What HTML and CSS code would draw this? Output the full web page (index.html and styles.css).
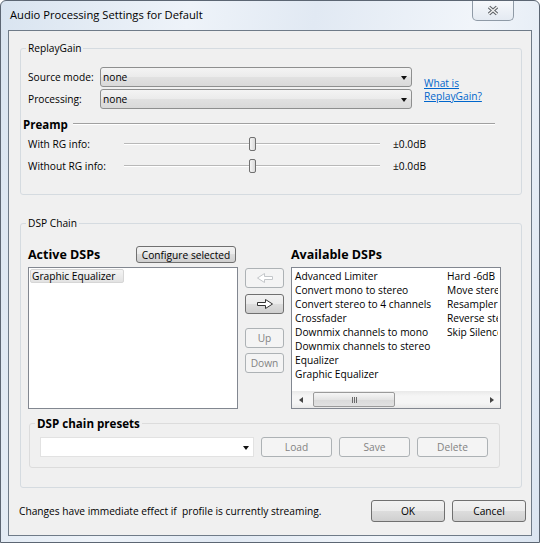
FILE: index.html
```html
<!DOCTYPE html>
<html lang="en">
<head>
  <meta charset="UTF-8" />
  <title>Audio Processing Settings for Default</title>
  <link rel="stylesheet" href="styles.css">
</head>
<body>
  <div class="window">
    <!-- title bar -->
    <div class="titlebar">
      <span class="title">Audio Processing Settings for Default</span>
      <button class="close" title="Close">
        <svg width="14" height="11" viewBox="0 0 14 11">
          <path d="M3 2L11 9M11 2L3 9" stroke="#5f6368" stroke-width="3.6" />
          <path d="M3 2L11 9M11 2L3 9" stroke="#f2f2f2" stroke-width="1.4" />
        </svg>
      </button>
    </div>

    <div class="client">
      <!-- ReplayGain -->
      <fieldset class="group replaygain">
        <legend>ReplayGain</legend>
        <div class="rg-top">
          <div class="rg-fields">
            <div class="field">
              <span class="field-label">Source mode:</span>
              <div class="combo"><span>none</span><span class="combo-arrow"></span></div>
            </div>
            <div class="field">
              <span class="field-label">Processing:</span>
              <div class="combo"><span>none</span><span class="combo-arrow"></span></div>
            </div>
          </div>
          <a class="help-link" href="#">What is<br>ReplayGain?</a>
        </div>

        <div class="preamp">
          <span class="preamp-title">Preamp</span>
          <span class="preamp-rule"></span>
        </div>
        <div class="sliders">
          <div class="slider-row">
            <span class="slider-label">With RG info:</span>
            <div class="slider-track"><span class="slider-thumb"></span></div>
            <span class="slider-value">±0.0dB</span>
          </div>
          <div class="slider-row">
            <span class="slider-label">Without RG info:</span>
            <div class="slider-track"><span class="slider-thumb"></span></div>
            <span class="slider-value">±0.0dB</span>
          </div>
        </div>
      </fieldset>

      <!-- DSP chain -->
      <fieldset class="group dsp">
        <legend>DSP Chain</legend>
        <div class="dsp-cols">
          <div class="dsp-col">
            <div class="dsp-head">
              <span class="dsp-title">Active DSPs</span>
              <button class="btn configure-btn">Configure selected</button>
            </div>
            <div class="dsp-list active-list">
              <div class="active-item">Graphic Equalizer</div>
            </div>
          </div>

          <div class="move-btns">
            <button class="btn move-btn" disabled>
              <svg width="18" height="12" viewBox="0 0 18 12">
                <path d="M16.5 4.5H8.5V1.5L1.5 6L8.5 10.5V7.5H16.5Z" fill="#fff" stroke="#c4c7ca" />
              </svg>
            </button>
            <button class="btn move-btn right">
              <svg width="18" height="12" viewBox="0 0 18 12">
                <path d="M1.5 4.5H9.5V1.5L16.5 6L9.5 10.5V7.5H1.5Z" fill="#fff" stroke="#333" />
              </svg>
            </button>
            <button class="btn move-btn up" disabled>Up</button>
            <button class="btn move-btn down" disabled>Down</button>
          </div>

          <div class="dsp-col avail">
            <div class="dsp-head">
              <span class="dsp-title">Available DSPs</span>
            </div>
            <div class="dsp-list avail-list">
              <div class="avail-items">
                <div class="avail-col">
                  <div class="item">Advanced Limiter</div>
                  <div class="item">Convert mono to stereo</div>
                  <div class="item">Convert stereo to 4 channels</div>
                  <div class="item">Crossfader</div>
                  <div class="item">Downmix channels to mono</div>
                  <div class="item">Downmix channels to stereo</div>
                  <div class="item">Equalizer</div>
                  <div class="item">Graphic Equalizer</div>
                </div>
                <div class="avail-col2">
                  <div class="item">Hard -6dB</div>
                  <div class="item">Move stereo to center + side</div>
                  <div class="item">Resampler (PPHS)</div>
                  <div class="item">Reverse stereo channels</div>
                  <div class="item">Skip Silence</div>
                </div>
              </div>
              <div class="hscroll">
                <span class="sb-arrow"><span class="tri-left"></span></span>
                <span class="sb-thumb"><span class="grip"></span></span>
                <span class="sb-arrow end"><span class="tri-right"></span></span>
              </div>
            </div>
          </div>
        </div>

        <fieldset class="presets">
          <legend>DSP chain presets</legend>
          <div class="presets-row">
            <div class="preset-combo"><span class="combo-arrow"></span></div>
            <button class="btn preset-btn" disabled>Load</button>
            <button class="btn preset-btn" disabled>Save</button>
            <button class="btn preset-btn" disabled>Delete</button>
          </div>
        </fieldset>
      </fieldset>

      <div class="footer">
        <span class="footer-note">Changes have immediate effect if&nbsp; profile is currently streaming.</span>
        <button class="btn ok">OK</button>
        <button class="btn cancel">Cancel</button>
      </div>
    </div>
  </div>
</body>
</html>
```

FILE: styles.css
```css
* {
  box-sizing: border-box;
}

body {
  margin: 0;
  font-family: "Open Sans", "Noto Sans", sans-serif;
  font-size: 10.2px;
  color: #000;
  background: #fff;
}

.window {
  width: 540px;
  height: 543px;
  border: 1px solid #5c6673;
  border-radius: 6px 6px 0 0;
  background: linear-gradient(100deg, #d9e4f0 0%, #eef3f9 30%, #e1e9f3 50%, #f1f5fa 75%, #dbe5f1 100%);
  display: flex;
  flex-direction: column;
  overflow: hidden;
}

/* title bar */
.titlebar {
  height: 29px;
  flex-shrink: 0;
  display: flex;
  align-items: flex-start;
}

.title {
  margin: 6px 0 0 9px;
  font-size: 11.2px;
  line-height: 16px;
}

.close {
  margin: -1px 25px 0 auto;
  width: 42px;
  height: 21px;
  padding: 0;
  border: 1px solid #8f9aa6;
  border-top: none;
  border-radius: 0 0 5px 5px;
  background: linear-gradient(#f7f9fc, #e4eaf2);
  display: flex;
  align-items: center;
  justify-content: center;
}

/* dialog area */
.client {
  margin-left: 7px;
  width: 524px;
  height: 506px;
  border: 1px solid #6f7b88;
  background: #f0f0f0;
  padding: 9px 5px 0 11px;
  display: flex;
  flex-direction: column;
}

.group {
  margin: 0 4px 0 0;
  padding: 11px 9px 17px 7px;
  border: 1px solid #d5dbe0;
  border-radius: 3px;
  min-width: 0;
}

.group > legend {
  padding: 0 2px;
  margin-left: -2px;
  line-height: 16px;
}

/* ReplayGain */
.rg-top {
  display: flex;
  align-items: flex-start;
}

.rg-fields {
  display: flex;
  flex-direction: column;
  gap: 2px;
}

.field {
  display: flex;
  align-items: center;
  height: 20px;
}

.field-label {
  width: 72px;
}

.combo {
  width: 312px;
  height: 20px;
  border: 1px solid #8e8f8f;
  border-radius: 3px;
  background: linear-gradient(#f4f4f4, #ebebeb 50%, #e1e1e1 52%, #d9d9d9);
  display: flex;
  align-items: center;
  padding: 0 0 0 2px;
}

.combo-arrow {
  margin: 1px 4px 0 auto;
  width: 0;
  height: 0;
  border-left: 3.5px solid transparent;
  border-right: 3.5px solid transparent;
  border-top: 4px solid #111;
}

.help-link {
  margin: 10px 0 0 12px;
  line-height: 13px;
  color: #0066cc;
  text-decoration: underline;
}

.preamp {
  display: flex;
  align-items: center;
  height: 16px;
  margin: 7px 0 0 -5px;
}

.preamp-title {
  font-weight: bold;
  font-size: 11.5px;
}

.preamp-rule {
  flex: 1;
  margin: 0 17px 0 5px;
  border-top: 1px solid #a0a0a0;
  border-bottom: 1px solid #fff;
}

.sliders {
  margin-top: 1px;
}

.slider-row {
  display: flex;
  align-items: center;
  height: 22px;
}

.slider-label {
  width: 96px;
}

.slider-track {
  width: 256px;
  height: 14px;
  display: flex;
  justify-content: center;
  align-items: center;
  background: linear-gradient(to bottom, transparent 6px, #b8b8b8 6px, #b8b8b8 7px, #fff 7px, #fff 8px, transparent 8px);
}

.slider-thumb {
  width: 7px;
  height: 14px;
  border: 1px solid #707070;
  border-radius: 2px;
  background: linear-gradient(to right, #f5f5f5, #dadada);
}

.slider-value {
  margin-left: 13px;
}

/* DSP chain */
.dsp {
  margin-top: 20px;
  padding: 15px 9px 19px 7px;
}

.dsp-cols {
  display: flex;
  align-items: flex-start;
}

.dsp-col {
  width: 210px;
  display: flex;
  flex-direction: column;
}

.dsp-head {
  display: flex;
  align-items: center;
  height: 17px;
}

.dsp-title {
  font-weight: bold;
  font-size: 12.5px;
}

.dsp-list {
  margin-top: 4px;
  height: 142px;
  border: 1px solid #828790;
  background: #fff;
}

.active-item {
  margin: 1px 0 0 1px;
  width: 94px;
  height: 14px;
  line-height: 12px;
  padding: 0 1px;
  border: 1px solid #d6d6d6;
  border-radius: 2px;
  background: linear-gradient(#f4f4f4, #e2e2e2);
  white-space: nowrap;
}

.btn {
  font: inherit;
  color: #000;
  padding: 0;
  border: 1px solid #707070;
  border-radius: 3px;
  background: linear-gradient(#f2f2f2 0%, #ebebeb 49%, #dddddd 50%, #cfcfcf 100%);
  display: flex;
  align-items: center;
  justify-content: center;
}

.btn:disabled {
  border-color: #adb2b5;
  background: #f4f4f4;
  color: #838383;
}

.configure-btn {
  margin: 0 2px 0 auto;
  width: 100px;
  height: 17px;
}

.move-btns {
  margin: 22px 0 0 6px;
  width: 40px;
  display: flex;
  flex-direction: column;
  align-items: flex-end;
}

.move-btn {
  width: 39px;
  height: 20px;
}

.move-btn.right {
  margin-top: 6px;
}

.move-btn.up {
  margin-top: 14px;
}

.move-btn.down {
  margin-top: 5px;
}

.avail {
  margin-left: 7px;
}

.avail-list {
  display: flex;
  flex-direction: column;
}

.avail-items {
  flex: 1;
  display: flex;
  padding: 1px 2px 0 3px;
  overflow: hidden;
}

.avail-col {
  width: 152px;
  flex-shrink: 0;
}

.avail-col2 {
  flex: 1;
  min-width: 0;
  overflow: hidden;
}

.item {
  line-height: 14px;
  white-space: nowrap;
}

/* horizontal scroll bar */
.hscroll {
  height: 17px;
  flex-shrink: 0;
  display: flex;
  align-items: center;
  background: linear-gradient(#e9e9e9, #f5f5f5 30%, #f5f5f5 70%, #e9e9e9);
}

.sb-arrow {
  width: 17px;
  height: 17px;
  display: flex;
  align-items: center;
  justify-content: center;
}

.sb-arrow.end {
  margin-left: auto;
}

.tri-left {
  width: 0;
  height: 0;
  border-top: 3.5px solid transparent;
  border-bottom: 3.5px solid transparent;
  border-right: 4px solid #444;
}

.tri-right {
  width: 0;
  height: 0;
  border-top: 3.5px solid transparent;
  border-bottom: 3.5px solid transparent;
  border-left: 4px solid #444;
}

.sb-thumb {
  margin-left: 4px;
  width: 82px;
  height: 15px;
  border: 1px solid #9a9a9a;
  border-radius: 2px;
  background: linear-gradient(#f6f6f6, #e4e4e4 50%, #d9d9d9 51%, #e2e2e2);
  display: flex;
  align-items: center;
  justify-content: center;
}

.grip {
  width: 5px;
  height: 6px;
  background: repeating-linear-gradient(to right, #6a6a6a 0 1px, transparent 1px 2px);
}

/* presets */
.presets {
  margin: 6px 0 0 1px;
  width: 471px;
  min-width: 0;
  padding: 5px 11px 10px 10px;
  border: 1px solid #dcdcdc;
  border-radius: 3px;
}

.presets > legend {
  font-weight: bold;
  font-size: 11.6px;
  line-height: 17px;
  padding: 0 2px;
  margin-left: -5px;
}

.presets-row {
  display: flex;
  gap: 7px;
}

.preset-combo {
  width: 214px;
  height: 20px;
  background: #fff;
  border: 1px solid #e2e2e2;
  display: flex;
  align-items: center;
}

.preset-btn {
  width: 71px;
  height: 20px;
}

/* bottom bar */
.footer {
  display: flex;
  align-items: center;
  height: 22px;
  margin: 12px 0 0 -1px;
}

.footer .btn {
  width: 74px;
  height: 22px;
}

.ok {
  margin-left: auto;
}

.cancel {
  margin-left: 7px;
}
```
